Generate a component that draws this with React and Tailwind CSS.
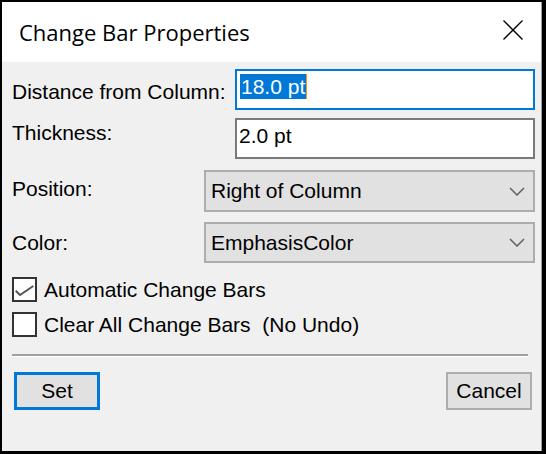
import React from 'react';

const Chevron = () => (
  <svg width="16" height="9" viewBox="0 0 16 9" fill="none">
    <polyline points="1,1 8,8 15,1" stroke="#606060" strokeWidth="1.5" />
  </svg>
);

const Checkbox = ({ checked }) => (
  <div className="w-[25px] h-[25px] border-2 border-[#333333] bg-white shrink-0">
    {checked ? (
      <svg width="21" height="21" viewBox="0 0 21 21" fill="none">
        <polyline points="1.7,11.7 6,16 19.3,7" stroke="#555555" strokeWidth="2" />
      </svg>
    ) : null}
  </div>
);

const App = () => {
  return (
    <div className="w-[546px] h-[454px] border-l-2 border-t-2 border-r-4 border-b-[3px] border-black bg-white text-black font-['Liberation_Sans',Arial,sans-serif]">
      <div className="h-full flex flex-col border-r border-[#a0a0a0]">
        <div className="h-[60px] shrink-0 bg-white flex items-center justify-between pl-[17px] pr-[18px]">
          <span className="font-['Open_Sans',sans-serif] text-[22px]">Change Bar Properties</span>
          <svg width="20" height="20" viewBox="0 0 20 20" fill="none" className="-mt-1">
            <line x1="0.5" y1="0.5" x2="19.5" y2="19.5" stroke="#000" strokeWidth="1.3" />
            <line x1="19.5" y1="0.5" x2="0.5" y2="19.5" stroke="#000" strokeWidth="1.3" />
          </svg>
        </div>

        <div className="flex-1 bg-[#f0f0f0] pl-[10px] pt-[7px] text-[21px] leading-6">
          <div className="flex h-[41px]">
            <div className="w-[223px] pt-[11px]">Distance from Column:</div>
            <div className="w-[300px] h-[41px] border-2 border-[#0078d7] bg-white pl-[3px] pt-[3px] flex items-start">
              <span className="inline-block leading-[25px] bg-[#0078d7] text-white px-[1px]">18.0 pt</span>
              <span className="inline-block w-px h-[25px] bg-[#f7931e]" />
            </div>
          </div>

          <div className="flex h-[41px] mt-[8px]">
            <div className="w-[223px] pt-[3px]">Thickness:</div>
            <div className="w-[300px] h-[41px] border-2 border-[#7a7a7a] bg-white pl-[2px] pt-[4px]">2.0 pt</div>
          </div>

          <div className="flex h-[42px] mt-[11px]">
            <div className="w-[192px] pt-[7px]">Position:</div>
            <div className="w-[331px] h-[42px] border-2 border-[#adadad] bg-[#e1e1e1] flex items-center justify-between pl-[5px] pr-[8px]">
              <span>Right of Column</span>
              <Chevron />
            </div>
          </div>

          <div className="flex h-[41px] mt-[10px]">
            <div className="w-[192px] pt-[9px]">Color:</div>
            <div className="w-[331px] h-[41px] border-2 border-[#adadad] bg-[#e1e1e1] flex items-center justify-between pl-[5px] pr-[8px]">
              <span>EmphasisColor</span>
              <Chevron />
            </div>
          </div>

          <div className="flex items-center gap-[7px] mt-[14px] h-[25px]">
            <Checkbox checked />
            <span>Automatic Change Bars</span>
          </div>

          <div className="flex items-center gap-[7px] mt-[10px] h-[25px]">
            <Checkbox />
            <span className="whitespace-pre">Clear All Change Bars  (No Undo)</span>
          </div>

          <div className="w-[516px] mt-[17px] border-t-2 border-[#a0a0a0] border-b border-b-white" />

          <div className="w-[520px] mt-[15px] flex justify-between">
            <button className="ml-[2px] w-[86px] h-[38px] border-[3px] border-[#0078d7] bg-[#e1e1e1] flex items-center justify-center">
              Set
            </button>
            <button className="w-[86px] h-[38px] border-2 border-[#adadad] bg-[#e1e1e1] flex items-center justify-center">
              Cancel
            </button>
          </div>
        </div>
      </div>
    </div>
  );
};

export default App;
